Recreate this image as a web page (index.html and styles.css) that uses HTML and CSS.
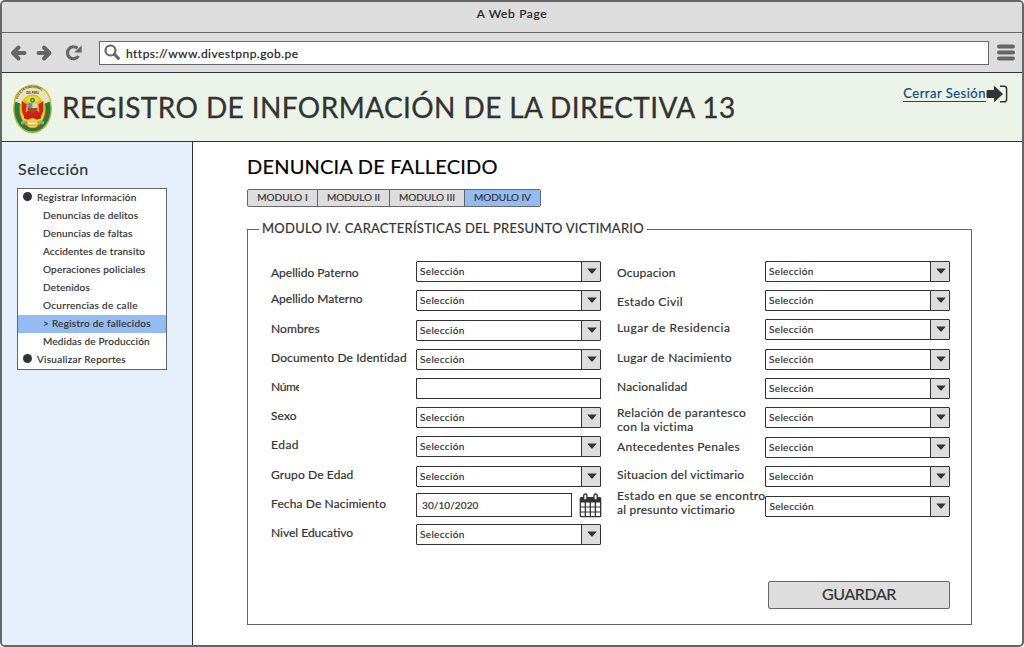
FILE: index.html
```
<!DOCTYPE html>
<html lang="es">
<head>
<meta charset="utf-8">
<title>A Web Page</title>
<link rel="stylesheet" href="styles.css">
</head>
<body>
<svg width="0" height="0" class="defs">
  <symbol id="arrow" viewBox="0 0 10 6"><path d="M.8.4h8.400q.8 0 .2.700L5.700 5.300q-.7.700-1.400 0L.6 1.100Q0 .4.8.4z" fill="#333"/></symbol>
</svg>
<div class="window">
  <div class="titlebar">A Web Page</div>
  <div class="toolbar">
    <svg class="nav-icons" width="76" height="18" viewBox="0 0 76 18">
      <g fill="none" stroke="#666" stroke-width="4" stroke-linecap="round" stroke-linejoin="round">
        <path d="M3.500 9H14.500M8.500 3.500L3 9l5.500 5.500"/>
        <path d="M28.500 9H38M34 3.500L39.500 9 34 14.500"/>
      </g>
      <path d="M67.500 4.300A6 6 0 1 0 68.500 12" fill="none" stroke="#666" stroke-width="3.200"/>
      <path d="M71.700 1.500v7h-7.600z" fill="#666"/>
    </svg>
    <div class="url">
      <svg width="18" height="17" viewBox="0 0 18 17"><circle cx="6.500" cy="6.500" r="5" fill="none" stroke="#666" stroke-width="2.200"/><path d="M10.300 10.300l4.200 4" stroke="#666" stroke-width="3" stroke-linecap="round"/></svg>
      <span>https://www.divestpnp.gob.pe</span>
    </div>
    <svg class="menu" width="18" height="17" viewBox="0 0 18 17"><path d="M2 2.500h14M2 8.500h14M2 14.500h14" stroke="#666" stroke-width="4" stroke-linecap="round"/></svg>
  </div>
  <header class="header">
    <svg class="crest" width="40" height="50" viewBox="0 0 40 50">
      <ellipse cx="20" cy="25" rx="19.300" ry="24.500" fill="#d9c400" stroke="#a99b34" stroke-width=".8"/>
      <ellipse cx="20" cy="25" rx="15.900" ry="20.500" fill="none" stroke="#16814a" stroke-width="5.200"/>
      <path d="M1.500 17C5-3.500 35-3.500 38.500 17L31 20C28 7 12 7 9 20z" fill="#e9e3bd"/>
      <path d="M1.500 17C5-4 35-4 38.500 17" fill="none" stroke="#d4bd1c" stroke-width="1.600"/>
      <ellipse cx="20" cy="28" rx="11.500" ry="16.500" fill="#eedb2b"/>
      <path d="M8.500 17l4-2 3 3h9l3-3 4 2-2 13-4 5h-11l-4-5z" fill="#e8b52b"/>
      <path d="M9 17l5 3-1 8 4 3v4h-5l-3-8zM31 17l-5 3 1 8-4 3v4h5l3-8z" fill="#cf2420"/>
      <path d="M14.500 27h11l3.500 7-4 2-5-2-5 2-4-2z" fill="#ca211c"/>
      <path d="M15 19h5v5h-5z" fill="#4a9db2"/><path d="M20 19h5v5h-5z" fill="#cfd7c1"/><path d="M15 24h10v2q-5 6-10 0z" fill="#bd3a23"/>
      <circle cx="20" cy="16" r="2.500" fill="#2a8b52"/><circle cx="20" cy="16" r="1" fill="#e6d33a"/>
      <path d="M11 36l4 2h10l4-2-2 6H13z" fill="#d49a2b"/><path d="M15 38.500h10v2.500H15z" fill="#f0ead3"/>
      <path d="M4 29l3 1M5 34l3-1M36 29l-3 1M35 34l-3-1M13 45l1-3M26 42l1 3M18.500 45h3" stroke="#d52a1f" stroke-width="1.700"/>
      <circle cx="10" cy="39" r="2" fill="#8dae79"/><circle cx="30" cy="39" r="2" fill="#8dae79"/>
      <path id="crest-arc" d="M4.300 18C6.500-1.500 33.500-1.500 35.700 18" fill="none"/>
      <text class="crest-text"><textPath href="#crest-arc" startOffset="3">POLICIA NACIONAL</textPath></text>
      <text class="crest-text crest-sub" x="20" y="10" text-anchor="middle">DEL PERU</text>
    </svg>
    <h1>REGISTRO DE INFORMACIÓN DE LA DIRECTIVA 13</h1>
    <a class="logout"><span>Cerrar Sesión</span>
      <svg width="22" height="18" viewBox="0 0 22 18"><path d="M1 5.500h7.500V1.500L16.500 9l-8 7.500v-4H1z" fill="#333" stroke="#333" stroke-linejoin="round"/><path d="M14 1.200h4q2.600 0 2.600 2.600v10.400q0 2.600-2.600 2.600h-4" fill="none" stroke="#333" stroke-width="1.500"/></svg>
    </a>
  </header>
  <div class="body">
    <aside class="sidebar">
      <h2>Selección</h2>
      <ul class="tree">
        <li class="root">Registrar Información</li>
        <li>Denuncias de delitos</li>
        <li>Denuncias de faltas</li>
        <li>Accidentes de transito</li>
        <li>Operaciones policiales</li>
        <li>Detenidos</li>
        <li class="wide">Ocurrencias de calle</li>
        <li class="selected">&gt; Registro de fallecidos</li>
        <li>Medidas de Producción</li>
        <li class="root">Visualizar Reportes</li>
      </ul>
    </aside>
    <main class="main">
      <h2>DENUNCIA DE FALLECIDO</h2>
      <nav class="tabs">
        <span class="tab tab-1">MODULO I</span><span class="tab tab-2">MODULO II</span><span class="tab tab-3">MODULO III</span><span class="tab tab-4 active">MODULO IV</span>
      </nav>
      <fieldset class="panel">
        <legend>MODULO IV. CARACTERÍSTICAS DEL PRESUNTO VICTIMARIO</legend>
        <div class="columns">
          <div class="col col-left">
            <div class="row"><label class="low tight">Apellido Paterno</label><div class="select"><span>Selección</span><i><svg><use href="#arrow"/></svg></i></div></div>
            <div class="row gap-9"><label class="tight">Apellido Materno</label><div class="select"><span>Selección</span><i><svg><use href="#arrow"/></svg></i></div></div>
            <div class="row"><label>Nombres</label><div class="select"><span>Selección</span><i><svg><use href="#arrow"/></svg></i></div></div>
            <div class="row"><label>Documento De Identidad</label><div class="select"><span>Selección</span><i><svg><use href="#arrow"/></svg></i></div></div>
            <div class="row"><label><span class="clipped">Número</span></label><div class="input"></div></div>
            <div class="row"><label>Sexo</label><div class="select"><span>Selección</span><i><svg><use href="#arrow"/></svg></i></div></div>
            <div class="row gap-9"><label class="wide">Edad</label><div class="select"><span>Selección</span><i><svg><use href="#arrow"/></svg></i></div></div>
            <div class="row gap-6"><label>Grupo De Edad</label><div class="select"><span>Selección</span><i><svg><use href="#arrow"/></svg></i></div></div>
            <div class="row date"><label>Fecha De Nacimiento</label><div class="input">30/10/2020</div>
              <svg class="calendar" width="23" height="25" viewBox="0 0 23 25"><rect x=".7" y="4" width="21.600" height="20.300" rx="1.500" fill="#333"/><path d="M2 9.500h3.700v4H2zM7 9.500h3.700v4H7zM12 9.500h3.700v4H12zM17 9.500h4v4h-4zM2 14.500h3.700v4H2zM7 14.500h3.700v4H7zM12 14.500h3.700v4H12zM17 14.500h4v4h-4zM2 19.500h3.700v3.500H2zM7 19.500h3.700v3.500H7zM12 19.500h3.700v3.500H12zM17 19.500h4v3.500h-4z" fill="#fff"/><rect x="4.700" y="1" width="3.200" height="6" rx="1.600" fill="#fff" stroke="#333" stroke-width="1.300"/><rect x="15" y="1" width="3.200" height="6" rx="1.600" fill="#fff" stroke="#333" stroke-width="1.300"/></svg>
            </div>
            <div class="row"><label class="tight">Nivel Educativo</label><div class="select"><span>Selección</span><i><svg><use href="#arrow"/></svg></i></div></div>
          </div>
          <div class="col col-right">
            <div class="row"><label class="low tight">Ocupacion</label><div class="select"><span>Selección</span><i><svg><use href="#arrow"/></svg></i></div></div>
            <div class="row"><label class="low">Estado Civil</label><div class="select"><span>Selección</span><i><svg><use href="#arrow"/></svg></i></div></div>
            <div class="row gap-9"><label class="wide">Lugar de Residencia</label><div class="select"><span>Selección</span><i><svg><use href="#arrow"/></svg></i></div></div>
            <div class="row"><label>Lugar de Nacimiento</label><div class="select"><span>Selección</span><i><svg><use href="#arrow"/></svg></i></div></div>
            <div class="row"><label class="tight">Nacionalidad</label><div class="select"><span>Selección</span><i><svg><use href="#arrow"/></svg></i></div></div>
            <div class="row gap-9"><label class="lower">Relación de parantesco<br>con la victima</label><div class="select"><span>Selección</span><i><svg><use href="#arrow"/></svg></i></div></div>
            <div class="row"><label class="level">Antecedentes Penales</label><div class="select"><span>Selección</span><i><svg><use href="#arrow"/></svg></i></div></div>
            <div class="row gap-9"><label class="snug">Situacion del victimario</label><div class="select"><span>Selección</span><i><svg><use href="#arrow"/></svg></i></div></div>
            <div class="row"><label class="raised">Estado en que se encontro<br><span class="snug">al presunto victimario</span></label><div class="select"><span>Selección</span><i><svg><use href="#arrow"/></svg></i></div></div>
          </div>
        </div>
        <div class="actions"><button class="save">GUARDAR</button></div>
      </fieldset>
    </main>
  </div>
</div>
</body>
</html>
```
FILE: styles.css
```
* { box-sizing: border-box; }
body { margin: 0; background: #fff; color: #333; font-family: Lato, "Liberation Sans", sans-serif; font-size: 12px; -webkit-text-stroke: .2px; }
h1, h2, ul { margin: 0; padding: 0; font-weight: 400; }
svg { display: block; flex: none; }
.defs { position: absolute; }

.window { display: flex; flex-direction: column; width: 1024px; height: 647px; border: 2px solid #666; border-radius: 5px; overflow: hidden; }
.titlebar { height: 31px; padding-bottom: 8px; display: flex; align-items: center; justify-content: center; background: #ddd; border-bottom: 1px solid #666; letter-spacing: .65px; }
.toolbar { height: 40px; display: flex; align-items: center; padding: 0 7px 0 8px; background: #ddd; border-bottom: 1px solid #333; }
.url { flex: 1; display: flex; align-items: center; height: 24px; margin: 0 8px 0 13px; padding-left: 4px; background: #fff; border: 1px solid #666; letter-spacing: .48px; }
.url span { padding: 1px 0 0 4px; }
.url, .titlebar { color: #222; }

.header { height: 69px; display: flex; align-items: center; padding: 0 14px 0 11px; background: #ecf4e9; border-bottom: 1px solid #333; }
.crest { width: 39px; margin-top: 4px; }
.crest-text { font-size: 3.300px; font-weight: 700; fill: #333; -webkit-text-stroke: 0; }
.crest-sub { font-size: 2.800px; }
.header h1 { flex: 1; padding-left: 10px; font-size: 28px; letter-spacing: .41px; line-height: 40px; white-space: nowrap; -webkit-text-stroke: .3px; }
.logout { display: flex; align-items: center; align-self: flex-start; margin-top: 11px; color: #0b4a8c; font-size: 13px; letter-spacing: .5px; white-space: nowrap; }
.logout span { line-height: 15px; border-bottom: 1px solid #0b4a8c; }
.logout svg { margin-top: 1px; }

.body { flex: 1; display: flex; min-height: 0; }
.sidebar { width: 191px; padding: 16px 0 0 15px; background: #e6f0fd; border-right: 1px solid #333; }
.sidebar h2 { height: 30px; padding-left: 1px; font-size: 16px; line-height: 21px; letter-spacing: .5px; }
.tree { width: 150px; border: 1px solid #666; background: #fff; list-style: none; font-size: 10px; letter-spacing: .2px; }
.tree li { display: flex; height: 18px; padding-left: 25px; line-height: 17px; }
.tree .root { padding-left: 5px; letter-spacing: .28px; }
.tree .root::before { content: ""; width: 9px; height: 9px; margin: 3px 5px 0 0; border-radius: 50%; background: #333; }
.tree .wide { letter-spacing: .32px; }
.tree .selected { background: #94bbf2; letter-spacing: .27px; }

.main { flex: 1; padding: 12px 50px 0 54px; }
.main h2 { height: 35px; color: #000; font-size: 20px; line-height: 25px; letter-spacing: .2px; }
.tabs { display: flex; height: 18px; width: 294px; border: 1px solid #666; border-radius: 2px; background: #ddd; font-size: 10px; line-height: 15px; }
.tab { text-align: center; border-right: 1px solid #666; }
.tab-1 { width: 70px; }
.tab-2 { width: 72px; }
.tab-3 { width: 75px; }
.tab-4 { width: 75px; border-right: 0; }
.active { background: #94bbf2; }

.panel { min-width: 0; width: 725px; height: 404px; margin: 14px 0 0; padding: 23px 21px 0 23px; border: 1px solid #666; }
.panel legend { margin-left: -12px; padding: 0 3px 2px; font-size: 13px; line-height: 15px; letter-spacing: .26px; white-space: nowrap; }
.columns { display: flex; gap: 16px; height: 320px; }
.col-left { width: 330px; }
.col-right { width: 333px; }
.row { display: flex; align-items: center; height: 21px; margin-bottom: 8px; }
.row.gap-9 { margin-bottom: 9px; }
.row.gap-6 { margin-bottom: 6px; }
.row label { flex: 1; padding-bottom: 3px; line-height: 14px; letter-spacing: .12px; white-space: nowrap; }
.col-right label { letter-spacing: .35px; }
.row .low { padding: 2px 0 0; }
.row .lower { padding: 5px 0 0; }
.row .level { padding-bottom: 2px; }
.row .raised { padding-bottom: 7px; }
.row .wide { letter-spacing: .5px; }
.row .snug { letter-spacing: .22px; }
.row .tight { letter-spacing: 0; }
.col-right .row .tight { letter-spacing: .2px; }
.clipped { display: block; width: 28px; overflow: hidden; letter-spacing: -.4px; }
.select, .input { display: flex; flex: none; width: 185px; height: 21px; border: 1px solid #333; background: #fff; font-size: 10px; line-height: 19px; }
.select { border-radius: 1px; }
.select span { flex: 1; padding-left: 3px; letter-spacing: .35px; }
.select i { display: flex; align-items: center; justify-content: center; width: 19px; background: #ddd; border-left: 1px solid #333; }
.select svg { width: 10px; height: 6px; margin: 0 0 1px 1px; }
.date.row { height: 24px; margin-bottom: 7px; }
.date .input { width: 156px; height: 24px; padding-left: 5px; line-height: 23px; letter-spacing: .1px; }
.calendar { margin: 0 -1px 0 7px; }
.date label { width: 145px; flex: none; }

.actions { display: flex; justify-content: flex-end; }
.save { width: 182px; height: 28px; padding: 0 0 3px; border: 1px solid #666; border-radius: 2px; background: #ddd; color: #333; font: 16px Lato, "Liberation Sans", sans-serif; letter-spacing: -.4px; -webkit-text-stroke: .2px; }
```
